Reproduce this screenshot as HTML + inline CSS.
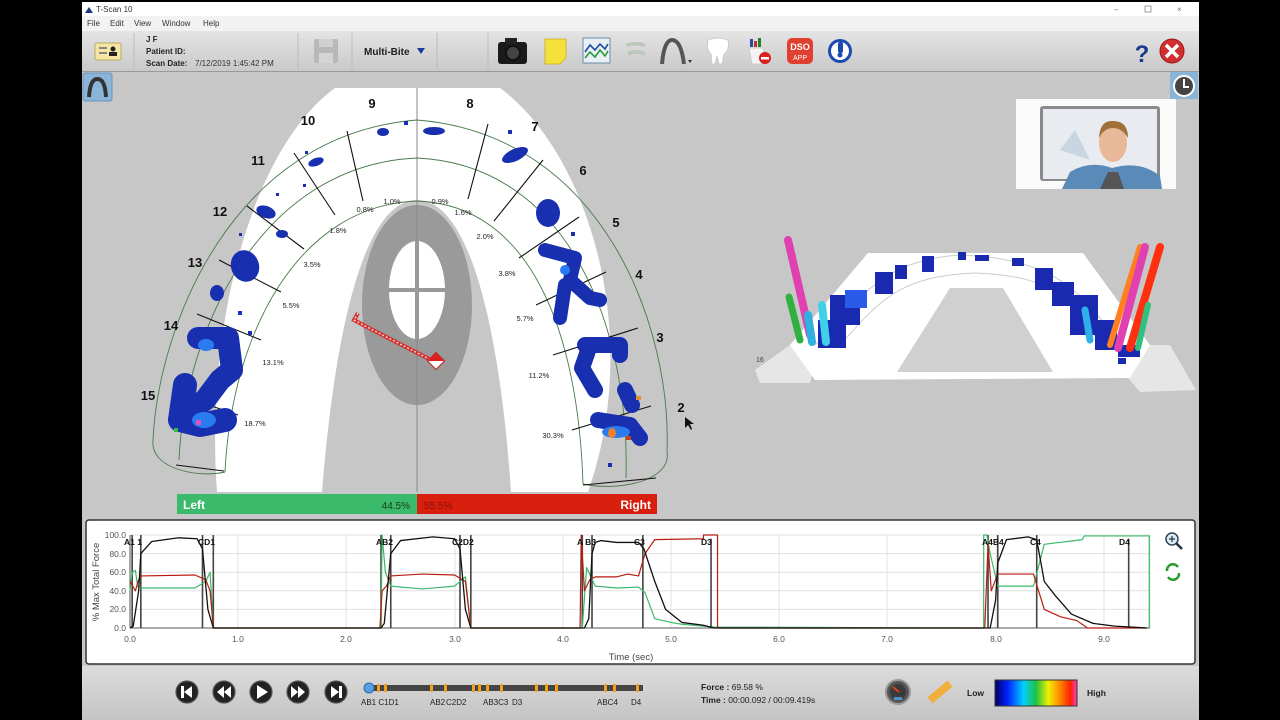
<!DOCTYPE html>
<html><head><meta charset="utf-8"><style>
html,body{margin:0;padding:0;background:#000;width:1280px;height:720px;overflow:hidden}
svg{display:block;font-family:"Liberation Sans",sans-serif}
</style></head><body>
<svg width="1280" height="720" viewBox="0 0 1280 720" xmlns="http://www.w3.org/2000/svg">
<defs>
<linearGradient id="tb" x1="0" y1="0" x2="0" y2="1"><stop offset="0" stop-color="#e4e4e4"/><stop offset="1" stop-color="#c9c9c9"/></linearGradient>
<linearGradient id="bb" x1="0" y1="0" x2="0" y2="1"><stop offset="0" stop-color="#dcdcdc"/><stop offset="1" stop-color="#c4c4c4"/></linearGradient>
<linearGradient id="spec" x1="0" y1="0" x2="1" y2="0"><stop offset="0" stop-color="#000060"/><stop offset="0.15" stop-color="#0020ff"/><stop offset="0.35" stop-color="#00d0ff"/><stop offset="0.5" stop-color="#20c040"/><stop offset="0.65" stop-color="#f0f000"/><stop offset="0.8" stop-color="#ff8000"/><stop offset="0.92" stop-color="#ff2000"/><stop offset="1" stop-color="#ff40c0"/></linearGradient>
</defs>
<rect x="0" y="0" width="1280" height="720" fill="#000"/>
<!-- title bar -->
<rect x="82" y="2" width="1117" height="14" fill="#fff"/>
<path d="M85 13 L89 7 L93 13 Z" fill="#1a3a7a"/>
<text x="96" y="12" font-size="8" fill="#333">T-Scan 10</text>
<text x="1114" y="12" font-size="8" fill="#777">–</text>
<rect x="1145" y="6" width="6" height="6" fill="none" stroke="#888" stroke-width="0.8"/>
<text x="1177" y="12" font-size="8" fill="#777">×</text>
<!-- menu -->
<rect x="82" y="16" width="1117" height="15" fill="#f2f2f2"/>
<g font-size="8" fill="#333"><text x="87" y="26">File</text><text x="110" y="26">Edit</text><text x="134" y="26">View</text><text x="162" y="26">Window</text><text x="203" y="26">Help</text></g>
<!-- toolbar -->
<rect x="82" y="31" width="1117" height="41" fill="url(#tb)"/>
<line x1="82" y1="71.5" x2="1199" y2="71.5" stroke="#999"/>
<g stroke="#bbb"><line x1="134" y1="33" x2="134" y2="69"/><line x1="298" y1="33" x2="298" y2="69"/><line x1="352" y1="33" x2="352" y2="69"/><line x1="437" y1="33" x2="437" y2="69"/><line x1="488" y1="33" x2="488" y2="69"/></g>
<rect x="95" y="43" width="26" height="17" rx="2" fill="#f5e6a6" stroke="#b8a860"/>
<rect x="99" y="47" width="8" height="2" fill="#888"/><rect x="99" y="52" width="8" height="2" fill="#888"/>
<circle cx="113" cy="49" r="2.5" fill="#222"/><rect x="109" y="52" width="8" height="4" fill="#222"/>
<g font-size="8" fill="#222" font-weight="bold"><text x="146" y="42">J F</text><text x="146" y="54">Patient ID:</text><text x="146" y="66">Scan Date:</text></g>
<text x="195" y="66" font-size="8" fill="#333">7/12/2019 1:45:42 PM</text>
<rect x="314" y="39" width="24" height="24" rx="2" fill="#b8b8b8"/><rect x="319" y="39" width="14" height="8" fill="#d0d0d0"/><rect x="319" y="53" width="14" height="10" fill="#d4d4d4"/>
<text x="364" y="55" font-size="10" font-weight="bold" fill="#222">Multi-Bite</text>
<path d="M417 48 L425 48 L421 54 Z" fill="#1a3a9a"/>
<!-- camera -->
<rect x="498" y="42" width="29" height="22" rx="3" fill="#1a1a1a"/><rect x="505" y="38" width="12" height="6" fill="#222"/><circle cx="513" cy="53" r="7" fill="#444" stroke="#111" stroke-width="2"/>
<!-- note -->
<path d="M545 39 L566 39 L566 58 L560 64 L545 64 Z" fill="#f4e13a" stroke="#c8b020" stroke-width="0.8"/>
<!-- graph -->
<rect x="583" y="38" width="27" height="25" fill="#e8f0f4" stroke="#6a8aaa"/>
<polyline points="585,52 590,45 595,50 600,44 605,49 608,44" fill="none" stroke="#1a4aa0" stroke-width="1.6"/>
<polyline points="585,58 590,52 595,57 600,50 605,56 608,51" fill="none" stroke="#2a9a3a" stroke-width="1.6"/>
<path d="M625 44 Q636 40 646 44 L644 47 Q636 44 628 47 Z M627 52 Q636 48 646 52 L644 56 Q636 52 629 56 Z" fill="#bcc8bc"/>
<path d="M662 64 Q664 40 672 40 Q681 40 684 64" fill="none" stroke="#555" stroke-width="4"/>
<path d="M688 60 L692 60 L690 63 Z" fill="#333"/>
<path d="M708 40 Q718 36 728 40 Q730 50 724 54 L722 64 L719 64 L717 56 L715 64 L712 64 L711 54 Q706 50 708 40 Z" fill="#fff" stroke="#ccc"/>
<rect x="750" y="39" width="3" height="8" fill="#2a4aa0"/><rect x="754" y="41" width="3" height="6" fill="#c03030"/><rect x="758" y="38" width="3" height="9" fill="#208030"/>
<path d="M749 48 L764 48 L762 64 L752 64 Z" fill="#f4f4f4" stroke="#ccc"/>
<circle cx="765" cy="58" r="6" fill="#d82020"/><rect x="761" y="57" width="8" height="2.5" fill="#fff"/>
<rect x="787" y="38" width="26" height="26" rx="5" fill="#e04030"/>
<text x="800" y="50" font-size="9" fill="#fff" text-anchor="middle" font-weight="bold">DSO</text>
<text x="800" y="60" font-size="7" fill="#fff" text-anchor="middle">APP</text>
<circle cx="840" cy="51" r="12" fill="#1a4ab0"/><circle cx="840" cy="51" r="9" fill="#fff"/><rect x="838" y="42" width="5" height="11" rx="2" fill="#1a4ab0"/><circle cx="840" cy="55" r="2.5" fill="#1a4ab0"/>
<text x="1142" y="62" font-size="24" font-weight="bold" fill="#1a3a8a" text-anchor="middle">?</text>
<circle cx="1172" cy="51" r="12" fill="#d03030" stroke="#a01818"/>
<path d="M1166 45 L1178 57 M1178 45 L1166 57" stroke="#fff" stroke-width="3.5"/>
<!-- main area -->
<rect x="82" y="72" width="1117" height="446" fill="#c7c7c7"/>
<rect x="83" y="73" width="29" height="28" rx="2" fill="#8ab4d8" stroke="#6a94b8"/>
<path d="M89 97 Q90 79 97.5 79 Q105 79 106 97" fill="none" stroke="#333" stroke-width="4"/>
<rect x="1170" y="72" width="28" height="27" fill="#8ab4d8"/>
<circle cx="1184" cy="86" r="10" fill="#444" stroke="#fff" stroke-width="2"/>
<path d="M1184 79 L1184 87 L1189 87" stroke="#fff" stroke-width="2" fill="none"/>
<!-- arch -->
<path d="M217,492 C205,330 250,150 335,88 L500,88 C585,150 645,330 588,492 L511,492 C500,330 470,200 417,200 C364,200 335,330 322,492 Z" fill="#fff"/>
<line x1="417" y1="88" x2="417" y2="492" stroke="#888" stroke-width="1"/>
<g fill="none" stroke="#4a7a4a" stroke-width="0.9">
<path d="M153,440 C158,330 230,135 417,120 C605,135 672,330 667,452"/>
<path d="M179,460 C185,330 260,165 417,158 C570,165 630,330 626,478"/>
<path d="M225,472 C232,330 300,205 417,201 C530,205 578,330 583,484"/>
<path d="M153,440 C150,470 200,478 225,472"/>
<path d="M667,452 C672,480 620,492 583,484"/>
</g>
<g stroke="#111" stroke-width="1.1">
<line x1="347" y1="131" x2="363" y2="201"/><line x1="294" y1="153" x2="335" y2="215"/><line x1="247" y1="206" x2="304" y2="249"/><line x1="219" y1="260" x2="281" y2="292"/><line x1="197" y1="314" x2="261" y2="340"/><line x1="176" y1="394" x2="238" y2="415"/><line x1="176" y1="465" x2="224" y2="471"/>
<line x1="488" y1="124" x2="468" y2="199"/><line x1="543" y1="160" x2="494" y2="221"/><line x1="579" y1="217" x2="519" y2="258"/><line x1="606" y1="272" x2="536" y2="305"/><line x1="638" y1="328" x2="553" y2="355"/><line x1="651" y1="406" x2="572" y2="430"/><line x1="656" y1="478" x2="583" y2="485"/>
</g>
<!-- blobs -->
<g fill="#1830b0">
<ellipse cx="383" cy="132" rx="6" ry="4"/><ellipse cx="434" cy="131" rx="11" ry="4"/><rect x="404" y="121" width="4" height="4"/><rect x="508" y="130" width="4" height="4"/>
<ellipse cx="515" cy="155" rx="14" ry="6" transform="rotate(-25 515 155)"/>
<ellipse cx="316" cy="162" rx="8" ry="4" transform="rotate(-20 316 162)"/><rect x="303" y="184" width="3" height="3"/><rect x="305" y="151" width="3" height="3"/><rect x="276" y="193" width="3" height="3"/>
<ellipse cx="266" cy="212" rx="10" ry="6" transform="rotate(20 266 212)"/><ellipse cx="282" cy="234" rx="6" ry="4"/><rect x="239" y="233" width="3" height="3"/>
<ellipse cx="245" cy="266" rx="14" ry="16" transform="rotate(-20 245 266)"/><ellipse cx="217" cy="293" rx="7" ry="8"/><rect x="238" y="311" width="4" height="4"/><rect x="248" y="331" width="4" height="4"/>
<ellipse cx="548" cy="213" rx="12" ry="14"/><rect x="571" y="232" width="4" height="4"/>
<rect x="608" y="463" width="4" height="4"/>
</g>
<g fill="none" stroke="#1830b0" stroke-linecap="round" stroke-linejoin="round">
<path d="M198 338 L228 338 L232 370 L220 380 L205 400 L190 410" stroke-width="22"/>
<path d="M185 385 L180 420 L200 425 L225 420" stroke-width="24"/>
<path d="M545 250 L575 258 L570 280 L590 298 L600 300 M565 285 L560 318" stroke-width="14"/>
<path d="M585 345 L620 345 L620 355 M590 345 L582 368 L595 390" stroke-width="16"/>
<path d="M598 420 L630 425 L640 438 M625 390 L632 405" stroke-width="16"/>
</g>
<g fill="#2a7af0"><ellipse cx="204" cy="420" rx="12" ry="8"/><ellipse cx="616" cy="432" rx="14" ry="6"/><ellipse cx="206" cy="345" rx="8" ry="6"/><ellipse cx="565" cy="270" rx="5" ry="5"/></g>
<ellipse cx="612" cy="433" rx="4" ry="5" fill="#f08030"/><rect x="626" y="436" width="5" height="4" fill="#c04020"/><rect x="196" y="420" width="5" height="5" fill="#e050c0"/><rect x="174" y="428" width="4" height="4" fill="#30c040"/><rect x="636" y="396" width="5" height="4" fill="#e09030"/>
<!-- tongue oval -->
<ellipse cx="417" cy="305" rx="55" ry="100" fill="#9a9a9a"/>
<line x1="417" y1="205" x2="417" y2="405" stroke="#888"/>
<ellipse cx="417" cy="290" rx="28" ry="49" fill="#fff"/>
<line x1="417" y1="241" x2="417" y2="339" stroke="#999" stroke-width="4"/>
<line x1="389" y1="290" x2="445" y2="290" stroke="#999" stroke-width="4"/>
<path d="M358 313 L354 320 L367 327 L435 362" fill="none" stroke="#d03030" stroke-width="4"/>
<path d="M358 313 L354 320 L367 327 L435 362" fill="none" stroke="#f8d0d0" stroke-width="1.5" stroke-dasharray="2 2"/>
<rect x="430" y="355" width="12" height="12" fill="#fff" stroke="#c02020" transform="rotate(45 436 361)"/>
<path d="M428 361 L444 361 L436 353 Z" fill="#e02020"/>
<g font-size="13" font-weight="bold" fill="#111" text-anchor="middle">
<text x="372" y="108">9</text><text x="470" y="108">8</text><text x="308" y="125">10</text><text x="535" y="131">7</text><text x="258" y="165">11</text><text x="583" y="175">6</text><text x="220" y="216">12</text><text x="616" y="227">5</text><text x="195" y="267">13</text><text x="639" y="279">4</text><text x="171" y="330">14</text><text x="660" y="342">3</text><text x="148" y="400">15</text><text x="681" y="412">2</text>
</g>
<g font-size="7.5" fill="#222" text-anchor="middle">
<text x="392" y="204">1.0%</text><text x="440" y="204">0.9%</text><text x="365" y="212">0.8%</text><text x="463" y="215">1.6%</text><text x="338" y="233">1.8%</text><text x="485" y="239">2.0%</text><text x="312" y="267">3.5%</text><text x="507" y="276">3.8%</text><text x="291" y="308">5.5%</text><text x="525" y="321">5.7%</text><text x="273" y="365">13.1%</text><text x="539" y="378">11.2%</text><text x="255" y="426">18.7%</text><text x="553" y="438">30.3%</text>
</g>
<path d="M685 417 L685 428 L688 425 L691 430 L692 429 L690 424 L694 424 Z" fill="#111"/>
<rect x="177" y="494" width="240" height="20" fill="#3cba6c"/>
<rect x="417" y="494" width="240" height="20" fill="#d81e0c"/>
<text x="183" y="509" font-size="12" font-weight="bold" fill="#fff">Left</text>
<text x="410" y="509" font-size="10" fill="#1a3a1a" text-anchor="end">44.5%</text>
<text x="424" y="509" font-size="10" fill="#8a1010">55.5%</text>
<text x="651" y="509" font-size="12" font-weight="bold" fill="#fff" text-anchor="end">Right</text>
<!-- 3D view -->
<path d="M755 370 L790 345 L820 345 L810 383 L760 383 Z" fill="#e6e6e6"/>
<path d="M1100 345 L1170 345 L1196 390 L1140 392 Z" fill="#e6e6e6"/>
<path d="M868 253 L1083 253 L1150 345 L1130 378 L815 380 L790 345 Z" fill="#fff"/>
<path d="M950 288 L1003 288 L1053 372 L897 372 Z" fill="#d0d0d0"/>
<path d="M815 345 C860 300 880 260 960 255 C1060 258 1090 300 1118 345" fill="none" stroke="#ccc" stroke-width="1"/>
<path d="M840 345 C880 300 900 276 975 273 C1055 276 1075 300 1100 345" fill="none" stroke="#ccc" stroke-width="1"/>
<g fill="#1a2ab0">
<rect x="830" y="295" width="30" height="30"/><rect x="845" y="290" width="22" height="18" fill="#2a5ae8"/><rect x="875" y="272" width="18" height="22"/><rect x="895" y="265" width="12" height="14"/><rect x="922" y="256" width="12" height="16"/><rect x="958" y="252" width="8" height="8"/><rect x="975" y="255" width="14" height="6"/><rect x="1012" y="258" width="12" height="8"/><rect x="1035" y="268" width="18" height="22"/><rect x="1052" y="282" width="22" height="24"/><rect x="1070" y="295" width="28" height="40"/><rect x="1095" y="320" width="22" height="30"/><rect x="818" y="320" width="28" height="28"/><rect x="1118" y="345" width="22" height="12"/><rect x="1118" y="358" width="8" height="6"/>
</g>
<g stroke-linecap="round">
<line x1="788" y1="240" x2="810" y2="335" stroke="#e040b0" stroke-width="8"/>
<line x1="789" y1="297" x2="800" y2="340" stroke="#30b040" stroke-width="7"/>
<line x1="808" y1="315" x2="812" y2="342" stroke="#30b0e0" stroke-width="8"/>
<line x1="822" y1="305" x2="826" y2="342" stroke="#40d0e8" stroke-width="8"/>
<line x1="1140" y1="247" x2="1110" y2="345" stroke="#ff8020" stroke-width="6"/>
<line x1="1145" y1="247" x2="1118" y2="348" stroke="#e040b0" stroke-width="8"/>
<line x1="1160" y1="247" x2="1130" y2="348" stroke="#ff3010" stroke-width="8"/>
<line x1="1148" y1="305" x2="1138" y2="348" stroke="#30c080" stroke-width="6"/>
<line x1="1085" y1="310" x2="1090" y2="340" stroke="#30b0e8" stroke-width="7"/>
</g>
<text x="756" y="362" font-size="7" fill="#444">16</text>
<!-- webcam -->
<rect x="1016" y="99" width="160" height="90" fill="#fafafa"/>
<rect x="1040" y="106" width="120" height="75" rx="3" fill="#8a8a8a"/>
<rect x="1043" y="109" width="114" height="70" fill="#e8ecf0"/>
<path d="M1060 150 L1075 130 L1090 160 Z" fill="#b0c8d8" opacity="0.6"/>
<path d="M1062 189 L1070 172 Q1090 160 1112 168 Q1140 160 1160 176 L1162 189 Z" fill="#5a8ab8"/>
<path d="M1100 189 L1108 172 L1118 172 L1124 189 Z" fill="#555"/>
<ellipse cx="1113" cy="143" rx="14" ry="19" fill="#e8b898"/>
<path d="M1099 138 Q1100 120 1113 121 Q1128 121 1128 138 Q1122 128 1113 128 Q1104 128 1099 138 Z" fill="#a0703a"/>
<!-- graph panel -->
<rect x="82" y="518" width="1117" height="150" fill="#c7c7c7"/>
<rect x="86" y="520" width="1109" height="144" rx="3" fill="#fff" stroke="#333" stroke-width="1.5"/>
<g stroke="#e0e0e0" stroke-width="1">
<line x1="130" y1="535" x2="1150" y2="535"/><line x1="130" y1="553.6" x2="1150" y2="553.6"/><line x1="130" y1="572.2" x2="1150" y2="572.2"/><line x1="130" y1="590.8" x2="1150" y2="590.8"/><line x1="130" y1="609.4" x2="1150" y2="609.4"/>
<line x1="238" y1="535" x2="238" y2="628"/><line x1="346" y1="535" x2="346" y2="628"/><line x1="455" y1="535" x2="455" y2="628"/><line x1="563" y1="535" x2="563" y2="628"/><line x1="671" y1="535" x2="671" y2="628"/><line x1="779" y1="535" x2="779" y2="628"/><line x1="887" y1="535" x2="887" y2="628"/><line x1="996" y1="535" x2="996" y2="628"/><line x1="1104" y1="535" x2="1104" y2="628"/><line x1="1150" y1="535" x2="1150" y2="628"/>
</g>
<line x1="130" y1="628" x2="1150" y2="628" stroke="#555"/>
<line x1="130" y1="535" x2="130" y2="628" stroke="#555"/>
<g font-size="8.5" fill="#555" text-anchor="end">
<text x="126" y="538">100.0</text><text x="126" y="557">80.0</text><text x="126" y="575">60.0</text><text x="126" y="594">40.0</text><text x="126" y="612">20.0</text><text x="126" y="631">0.0</text>
</g>
<g font-size="8.5" fill="#555" text-anchor="middle">
<text x="130" y="642">0.0</text><text x="238" y="642">1.0</text><text x="346" y="642">2.0</text><text x="455" y="642">3.0</text><text x="563" y="642">4.0</text><text x="671" y="642">5.0</text><text x="779" y="642">6.0</text><text x="887" y="642">7.0</text><text x="996" y="642">8.0</text><text x="1104" y="642">9.0</text>
</g>
<text x="631" y="660" font-size="9.5" fill="#444" text-anchor="middle">Time (sec)</text>
<text transform="translate(99 582) rotate(-90)" font-size="9.5" fill="#444" text-anchor="middle">% Max Total Force</text>
<g transform="translate(130 628) scale(108.2 -0.93)" fill="none" stroke-linejoin="round">
<g stroke="#444" stroke-width="1.6" vector-effect="non-scaling-stroke">
<path vector-effect="non-scaling-stroke" d="M0.02 0 V100 M0.1 0 V100 M0.67 0 V100 M0.77 0 V100 M2.32 0 V100 M2.41 0 V100 M3.05 0 V100 M3.15 0 V100 M4.18 0 V100 M4.27 0 V100 M4.74 0 V100 M5.37 0 V96 M7.93 0 V100 M8.02 0 V100 M8.38 0 V100 M9.23 0 V96"/>
</g>
<path vector-effect="non-scaling-stroke" stroke="#3cb86a" stroke-width="1.2" d="M0 40 L0.02 60 L0.05 62 L0.07 45 L0.1 43 L0.6 43 L0.7 50 L0.74 60 L0.77 0 L2.32 0 L2.33 100 L2.36 60 L2.41 45 L2.7 42 L3.0 45 L3.1 55 L3.15 0 L4.18 0 L4.22 65 L4.3 45 L4.5 43 L4.7 44 L4.76 38 L4.85 10 L5.0 6 L5.1 4 L5.4 1 L7.89 0 L7.89 100 L7.92 100 L7.95 80 L8.02 45 L8.35 45 L8.45 90 L8.8 95 L8.82 99 L9.42 99 L9.42 0"/>
<path vector-effect="non-scaling-stroke" stroke="#b81c10" stroke-width="1.2" d="M0 50 L0.05 40 L0.08 52 L0.1 56 L0.6 57 L0.7 52 L0.74 40 L0.77 0 L2.31 0 L2.33 40 L2.37 45 L2.41 56 L2.7 58 L3.0 57 L3.1 50 L3.15 0 L4.16 0 L4.17 100 L4.2 40 L4.25 52 L4.3 55 L4.5 55 L4.6 58 L4.7 56 L4.76 80 L4.85 95 L5.3 96 L5.3 100 L5.43 100 L5.43 0 L7.9 0 L7.93 90 L7.96 40 L8.02 58 L8.35 58 L8.45 20 L8.6 12 L8.75 8 L8.85 0 L9.4 0"/>
<path vector-effect="non-scaling-stroke" stroke="#111" stroke-width="1.3" d="M0 0 L0.03 2 L0.08 40 L0.1 80 L0.2 93 L0.45 97 L0.62 96 L0.67 85 L0.72 20 L0.77 0 L2.32 0 L2.35 5 L2.41 80 L2.5 94 L2.8 98 L3.0 96 L3.05 85 L3.1 20 L3.15 0 L4.2 0 L4.24 10 L4.27 80 L4.3 92 L4.35 94 L4.5 92 L4.7 92 L4.75 85 L4.85 50 L4.95 20 L5.1 6 L5.3 3 L5.4 0 L7.95 0 L8.0 30 L8.02 70 L8.1 95 L8.3 98 L8.38 95 L8.45 50 L8.55 35 L8.7 15 L8.9 5 L9.1 2 L9.4 0"/>
</g>
<g font-size="8.5" font-weight="bold" fill="#111">
<text x="124" y="545">A1 1</text><text x="198" y="545">CD1</text><text x="376" y="545">AB2</text><text x="452" y="545">C2D2</text><text x="577" y="545">A B3</text><text x="634" y="545">C3</text><text x="701" y="545">D3</text><text x="982" y="545">A4B4</text><text x="1030" y="545">C4</text><text x="1119" y="545">D4</text>
</g>
<circle cx="1172" cy="539" r="6" fill="#e0ecf4" stroke="#345" stroke-width="1.5"/>
<line x1="1176" y1="543" x2="1182" y2="549" stroke="#234" stroke-width="2.5"/>
<path d="M1169 539 H1175 M1172 536 V542" stroke="#234" stroke-width="1.2"/>
<path d="M1167 571 A6 6 0 0 1 1178 567 M1179 573 A6 6 0 0 1 1168 577" fill="none" stroke="#2a9a2a" stroke-width="2.5"/>
<!-- bottom controls -->
<rect x="82" y="666" width="1117" height="54" fill="url(#bb)"/>
<g fill="#222" stroke="#555" stroke-width="1.2">
<circle cx="187" cy="692" r="11"/><circle cx="224" cy="692" r="11"/><circle cx="261" cy="692" r="11"/><circle cx="298" cy="692" r="11"/><circle cx="336" cy="692" r="11"/>
</g>
<g fill="#fff">
<rect x="181" y="686" width="3" height="12"/><path d="M192 686 L192 698 L184 692 Z"/>
<path d="M224 686 L224 698 L217 692 Z M231 686 L231 698 L224 692 Z"/>
<path d="M257 685 L257 699 L268 692 Z"/>
<path d="M291 686 L291 698 L298 692 Z M298 686 L298 698 L305 692 Z"/>
<path d="M331 686 L331 698 L339 692 Z"/><rect x="339" y="686" width="3" height="12"/>
</g>
<rect x="370" y="685" width="273" height="6" fill="#444"/>
<g fill="#f0a020">
<rect x="377" y="684" width="3" height="8"/><rect x="384" y="684" width="3" height="8"/><rect x="430" y="684" width="3" height="8"/><rect x="444" y="684" width="3" height="8"/><rect x="472" y="684" width="3" height="8"/><rect x="478" y="684" width="3" height="8"/><rect x="486" y="684" width="3" height="8"/><rect x="500" y="684" width="3" height="8"/><rect x="535" y="684" width="3" height="8"/><rect x="545" y="684" width="3" height="8"/><rect x="555" y="684" width="3" height="8"/><rect x="604" y="684" width="3" height="8"/><rect x="613" y="684" width="3" height="8"/><rect x="636" y="684" width="3" height="8"/>
</g>
<circle cx="369" cy="688" r="5" fill="#5aa0e0" stroke="#2a6ab0"/>
<g font-size="8" fill="#222"><text x="361" y="705">AB1 C1D1</text><text x="430" y="705">AB2</text><text x="446" y="705">C2D2</text><text x="483" y="705">AB3C3</text><text x="512" y="705">D3</text><text x="597" y="705">ABC4</text><text x="631" y="705">D4</text></g>
<text x="701" y="690" font-size="8.5" fill="#222"><tspan font-weight="bold">Force :</tspan> 69.58 %</text>
<text x="701" y="703" font-size="8.5" fill="#222"><tspan font-weight="bold">Time :</tspan> 00:00.092 / 00:09.419s</text>
<circle cx="898" cy="692" r="12" fill="#555" stroke="#999" stroke-width="2"/><circle cx="898" cy="692" r="8" fill="#3a3a3a"/><line x1="893" y1="687" x2="899" y2="692" stroke="#e04020" stroke-width="2"/><rect x="894" y="697" width="8" height="3" fill="#4a90d0"/>
<rect x="927" y="688" width="26" height="8" fill="#f0b040" transform="rotate(-40 940 692)"/>
<text x="967" y="696" font-size="8.5" font-weight="bold" fill="#222">Low</text>
<rect x="995" y="680" width="82" height="26" fill="url(#spec)" stroke="#333"/>
<text x="1087" y="696" font-size="8.5" font-weight="bold" fill="#222">High</text>
</svg>
</body></html>
